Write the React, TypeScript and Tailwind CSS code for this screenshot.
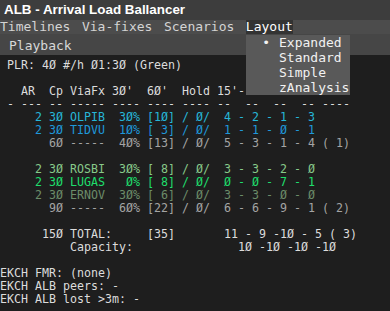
import React from "react";

const mono = "font-['DejaVu_Sans_Mono','Liberation_Mono',monospace]";

type Line = { t: string; c: string };

const lines: Line[] = [
  { t: " PLR: 4Ø #/h Ø1:3Ø (Green)", c: "text-[#dcdcdc]" },
  { t: "", c: "" },
  { t: "   AR  Cp ViaFx 3Ø'  6Ø'  Hold 15'-", c: "text-[#dcdcdc]" },
  { t: " - --- -- ----- ---- ---- ---- --  --  --  -- ----", c: "text-[#dcdcdc]" },
  { t: "     2 3Ø OLPIB  3Ø% [1Ø] / Ø/  4 - 2 - 1 - 3", c: "text-[#26b6d8]" },
  { t: "     2 3Ø TIDVU  1Ø% [ 3] / Ø/  1 - 1 - Ø - 1", c: "text-[#1f98da]" },
  { t: "       6Ø -----  4Ø% [13] / Ø/  5 - 3 - 1 - 4 ( 1)", c: "text-[#a4a4a4]" },
  { t: "", c: "" },
  { t: "     2 3Ø ROSBI  3Ø% [ 8] / Ø/  3 - 3 - 2 - Ø", c: "text-[#88c98a]" },
  { t: "     2 3Ø LUGAS   Ø% [ 8] / Ø/  Ø - Ø - 7 - 1", c: "text-[#1ede6c]" },
  { t: "     2 3Ø ERNOV  3Ø% [ 6] / Ø/  3 - 3 - Ø - Ø", c: "text-[#6c8c69]" },
  { t: "       9Ø -----  6Ø% [22] / Ø/  6 - 6 - 9 - 1 ( 2)", c: "text-[#a4a4a4]" },
  { t: "", c: "" },
  { t: "      15Ø TOTAL:     [35]       11 - 9 -1Ø - 5 ( 3)", c: "text-[#dcdcdc]" },
  { t: "          Capacity:               1Ø -1Ø -1Ø -1Ø", c: "text-[#dcdcdc]" },
  { t: "", c: "" },
  { t: "EKCH FMR: (none)", c: "text-[#dcdcdc]" },
  { t: "EKCH ALB peers: -", c: "text-[#dcdcdc]" },
  { t: "EKCH ALB lost >3m: -", c: "text-[#dcdcdc]" },
];

export default function App() {
  return (
    <div className="relative w-[390px] h-[311px] overflow-hidden bg-[#1e1e1e]">
      <div className="h-[20px] bg-[#3d3d3d] pl-[4px] flex items-center">
        <span className="font-['Liberation_Sans',Arial,sans-serif] font-bold text-[13.4px] leading-[20px] text-white">
          ALB - Arrival Load Ballancer
        </span>
      </div>
      <div className={`h-[14px] bg-[#4c4c4c] flex gap-[11.5px] text-[13px] leading-[14px] text-[#d4d4d4] ${mono}`}>
        <span>Timelines</span>
        <span>Via-fixes</span>
        <span>Scenarios</span>
        <span className="bg-[#333333] text-white">Layout</span>
      </div>
      <div className={`h-[21px] bg-[#464646] pl-[9px] pt-[4px] text-[13px] leading-[15px] text-[#d8d8d8] ${mono}`}>
        Playback
      </div>
      <div className={`pt-[4px] text-[11.63px] leading-[13px] ${mono}`}>
        {lines.map((l, i) => (
          <div key={i} className={`whitespace-pre h-[13px] ${l.c}`}>
            {l.t}
          </div>
        ))}
      </div>
      <div className={`absolute left-[246px] top-[35px] w-[104px] bg-[#595959] text-[13px] leading-[15px] text-[#f2f2f2] ${mono}`}>
        {["Expanded", "Standard", "Simple", "zAnalysis"].map((it, i) => (
          <div key={it} className="flex h-[15px]">
            <span className="w-[33px] flex justify-end pr-[9px]">{i === 0 ? "•" : ""}</span>
            <span>{it}</span>
          </div>
        ))}
      </div>
    </div>
  );
}
